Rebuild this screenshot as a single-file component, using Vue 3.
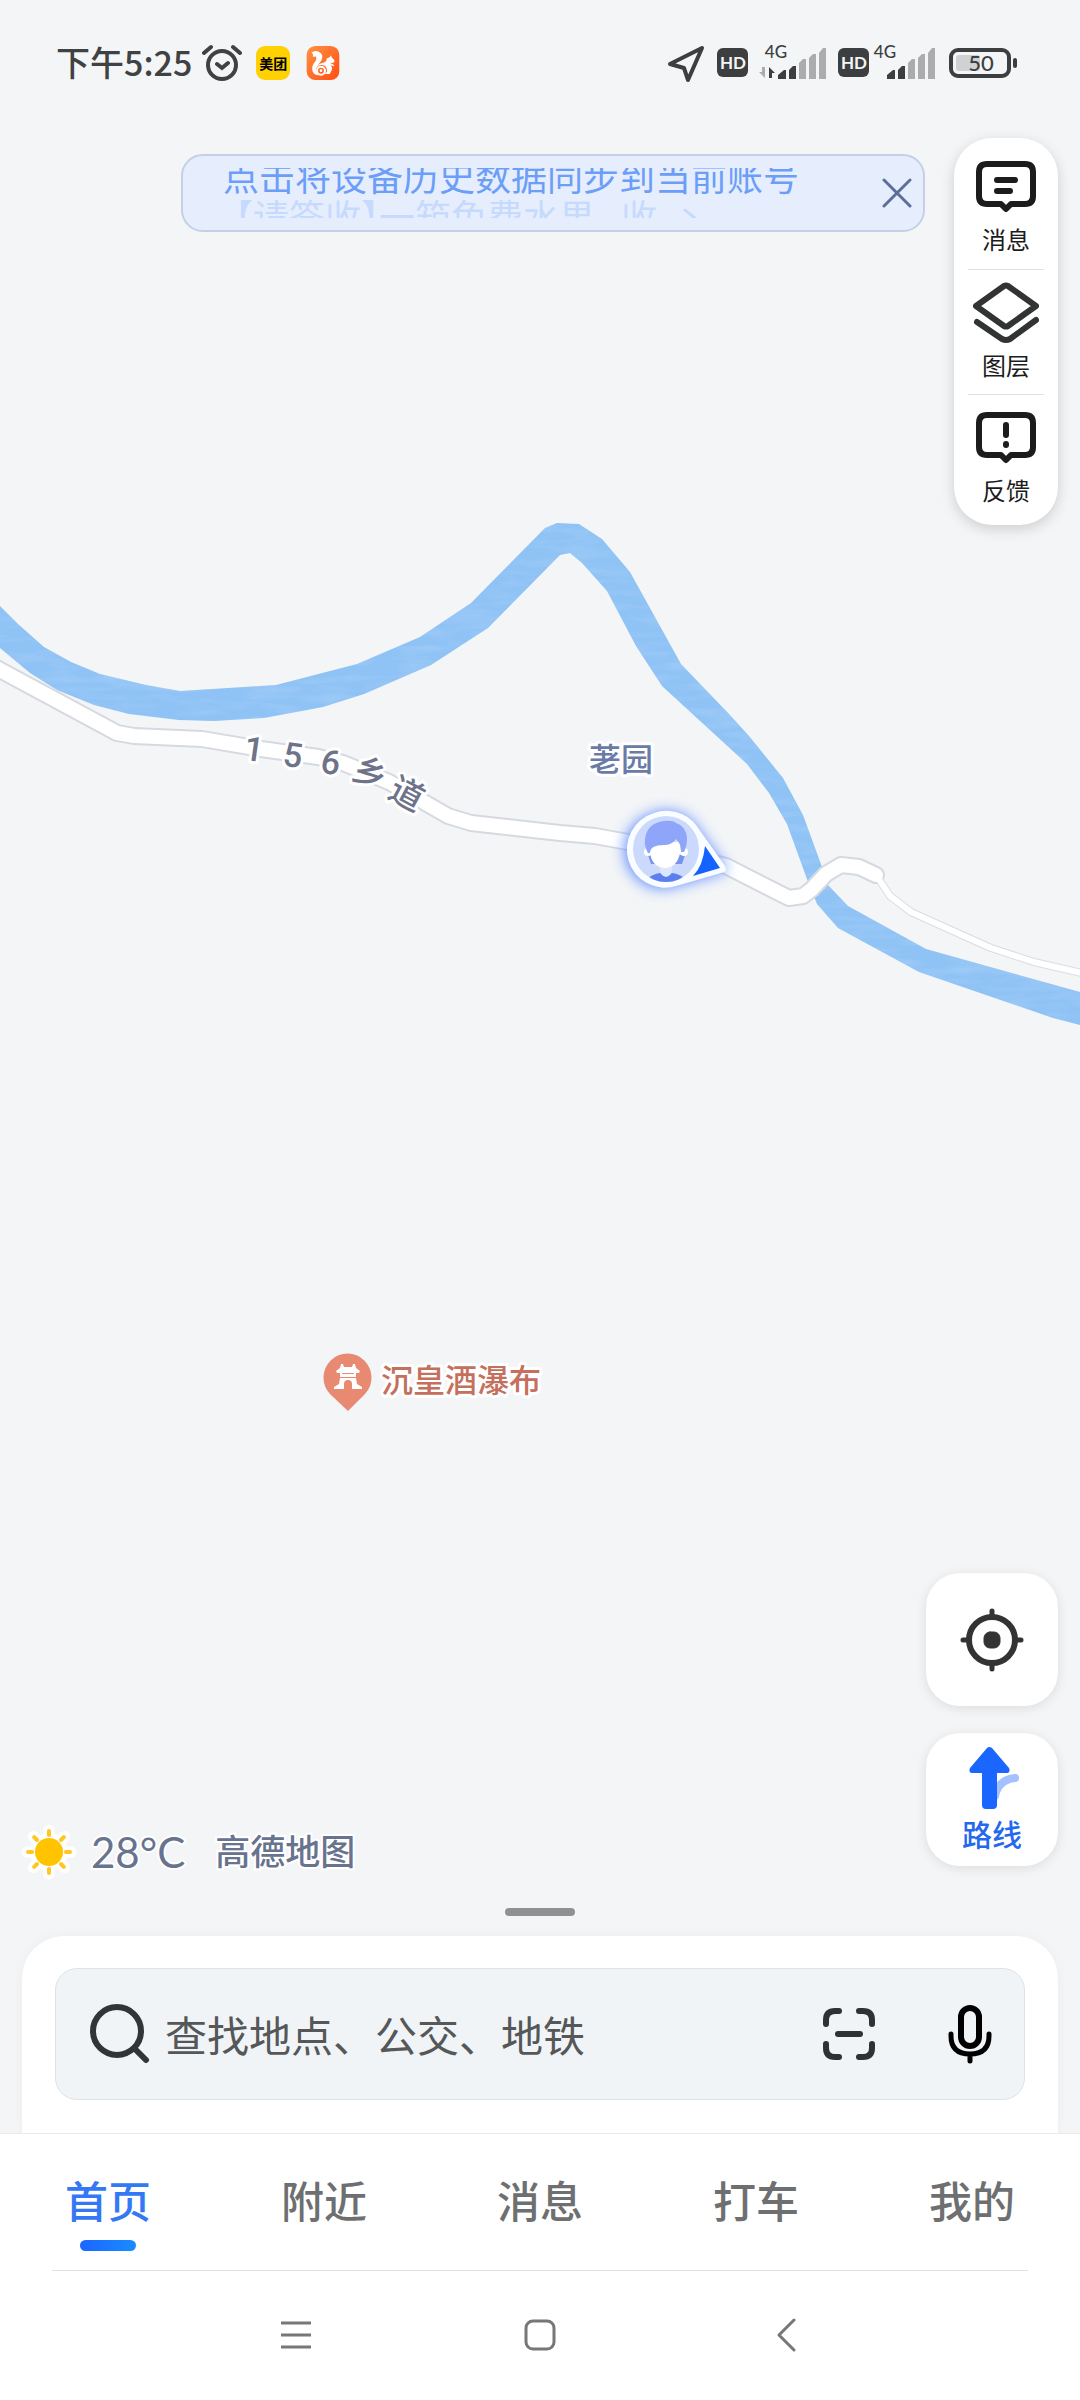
<script setup>
import { ref } from 'vue'

const tabs = ['首页', '附近', '消息', '打车', '我的']
const active = ref('首页')
const keyword = ref('')

const roadName = [
  { ch: '1', x: 254, y: 749, r: 8 },
  { ch: '5', x: 293, y: 755, r: 8 },
  { ch: '6', x: 331, y: 762, r: 12 },
  { ch: '乡', x: 370, y: 773, r: 22 },
  { ch: '道', x: 407, y: 794, r: 28 }
]

const river =
  'M0 606 L18 624 L44 647 L71 662 L100 674 L146 685 L180 691 L276 685 L357 664 L420 637 L471 603 L545 528 L557 523 L579 524 L602 539 L630 572 L681 664 L729 714 L749 736 L783 778 L803 815 L822 867 L828 885 L848 906 L926 949 L1080 992 L1080 1025 L1053 1018 L919 972 L838 928 L817 904 L807 879 L787 824 L769 793 L747 764 L662 686 L636 646 L607 591 L582 563 L570 553 L560 555 L488 628 L431 665 L364 694 L323 707 L264 718 L214 721 L179 720 L129 714 L94 705 L57 690 L30 673 L0 648 Z'
const road =
  'M-10 664 L0 670 L117 733 L134 736 L202 739 L261 749 L318 757 L343 763 L389 782 L448 816 L471 823 L560 833 L595 836 L628 842 L726 866 L789 898 L803 896 L812 889 L826 874 L841 865 L859 867 L876 875'
const lane = 'M876 875 L890 896 L911 912 L953 931 L991 948 L1034 962 L1090 975'
</script>

<template>
  <div class="app">
    <svg class="map" viewBox="0 0 1080 2400" preserveAspectRatio="xMidYMin slice" role="img" aria-label="地图">
      <defs>
        <filter id="water" x="0" y="0" width="1" height="1">
          <feTurbulence type="fractalNoise" baseFrequency="0.02 0.12" numOctaves="3" seed="4" />
          <feColorMatrix values="0 0 0 0 0.6  0 0 0 0 0.8  0 0 0 0 1  2 0 0 0 -0.8" />
          <feComposite in2="SourceGraphic" operator="in" />
        </filter>
        <filter id="glow" x="-0.5" y="-0.5" width="2" height="2">
          <feGaussianBlur stdDeviation="7" />
        </filter>
        <clipPath id="face"><circle cx="666" cy="849" r="33" /></clipPath>
      </defs>
      <path :d="river" fill="#8fc2f5" />
      <path :d="river" fill="#8fc2f5" filter="url(#water)" opacity="0.25" />

      <g fill="none" stroke-linejoin="round">
        <path :d="lane" stroke="#dadce3" stroke-width="8" />
        <path :d="road" stroke="#d6d9e0" stroke-width="18" stroke-linecap="round" />
        <path :d="lane" stroke="#fff" stroke-width="6" />
        <path :d="road" stroke="#fff" stroke-width="14" stroke-linecap="round" />
      </g>

      <g class="label road-label">
        <text v-for="(c, i) in roadName" :key="i" :x="c.x" :y="c.y + 12" :transform="`rotate(${c.r} ${c.x} ${c.y})`">{{ c.ch }}</text>
      </g>
      <text class="label village" x="621" y="771">荖园</text>

      <g>
        <path d="M651 814 A38 38 0 0 1 693 822 L725 866 Q728 872 722 873 L674 887 A38 38 0 1 1 651 814Z" fill="#4f80ff" filter="url(#glow)" opacity="0.85" />
        <path d="M654 813 A38 38 0 0 1 696 825 L725 866 Q728 872 721 873 L676 886 A38 38 0 1 1 654 813Z" fill="#fafdff" />
        <circle cx="666" cy="849" r="33" fill="#cbdafc" />
        <g clip-path="url(#face)">
          <path d="M648 855h37l-3 9h-31z" fill="#7893ee" />
          <path d="M645 880q8-6 15-7l12 0q8 1 15 7v8h-42z" fill="#5c7ff0" />
          <path d="M660 864h12v7q0 4-6 6-6-2-6-6z" fill="#dce7ff" />
          <circle cx="648" cy="852" r="4" fill="#fff" />
          <circle cx="684" cy="852" r="4" fill="#fff" />
          <path d="M650 842h30v10q-2 15-15 16-13-1-15-15z" fill="#fff" />
          <path d="M648 853q-4-7-3-14 2-16 19-18 9-1 12 2 10 3 11 15 0 8-3 14h-3q1-7-5-13-4 6-12 6-14 0-14 8z" fill="#8ea5f9" />
        </g>
        <path d="M705 846 L720 868 L693 876 Q703 866 705 846Z" fill="#1462ff" />
      </g>

      <path d="M348 1411 L330 1394 A24 24 0 1 1 365 1394Z" fill="#e88a72" />
      <g fill="#fff">
        <path d="M341 1364h2l1 3h8l1-3h2l1 4 4 3-1 2h-3v4h-16v-4h-3l-1-2 4-3z" />
        <path d="M340 1378h16l1 6 5 3v2h-10v-5q0-4-4-4t-4 4v5h-10v-2l5-3z" />
      </g>
      <path d="M342 1373h12v1h-12z" fill="#e88a72" />
      <text class="label scenic" x="381" y="1392">沉皇酒瀑布</text>
    </svg>

    <header class="status">
      <div class="status-side">
        <span class="time">下午5:25</span>
        <svg class="alarm" width="40" height="38" viewBox="0 0 40 38" fill="none" stroke="#404142" stroke-width="4" stroke-linecap="round">
          <circle cx="20" cy="21" r="14" /><path d="M2 9l7-6M38 9l-7-6M15 20l5 4 6-5" />
        </svg>
        <span class="meituan">美团</span>
        <svg class="uc" width="34" height="34" viewBox="0 0 98 102">
          <defs><linearGradient id="ucg" x1="0" y1="0" x2="1" y2="1"><stop offset="0" stop-color="#ff9142" /><stop offset="1" stop-color="#ff4e14" /></linearGradient></defs>
          <rect width="98" height="102" rx="26" fill="url(#ucg)" />
          <path d="M14 20Q24 12 36 17 52 24 45 42 40 51 32 58 38 52 50 50 57 49 60 43L59 38 70 33 72 28 76 35 83 42 83 49Q74 52 70 52 82 55 83 61L71 58Q79 64 75 73L69 84H54L61 77Q62 60 48 57 34 55 29 66 25 80 40 87 20 90 17 73 14 61 24 49 32 40 27 31 22 34 18 31 22 24 14 20Z" fill="#fff" />
          <circle cx="43" cy="74" r="12" fill="none" stroke="#fff" stroke-width="6" /><circle cx="43" cy="74" r="4" fill="#fff" />
        </svg>
      </div>
      <svg class="signals" width="352" height="44" viewBox="666 42 352 44" aria-label="信号和电量">
        <path d="M670 64L702 48 688 80 684 68Z" fill="none" stroke="#3d3e3f" stroke-width="4" stroke-linejoin="round" />
        <g fill="#3d3e3f">
          <rect x="717" y="48" width="31" height="29" rx="6" />
          <rect x="838" y="48" width="31" height="29" rx="6" />
          <path d="M778 79v-4l6-5h2v9zM789 79v-9l4-4h3v13zM887 79v-4l6-5h2v9zM898 79v-9l4-4h3v13z" />
          <path d="M769 67l6 6h-3v5h-3z" />
          <rect x="1013" y="58" width="4" height="10" rx="2" />
        </g>
        <path d="M765 67v11l-6-6h3v-5z" fill="#abacae" />
        <g fill="#abacae">
          <path v-for="d in [0, 109]" :key="d" :transform="`translate(${d} 0)`" d="M799 79v-16l4-4h3v20zM809 79v-21l4-4h3v25zM819 79v-26l4-5h3v31z" />
        </g>
        <g class="hd"><text x="733" y="69">HD</text><text x="854" y="69">HD</text></g>
        <g class="net"><text x="776" y="58">4G</text><text x="885" y="58">4G</text></g>
        <rect x="956" y="55" width="24" height="16" rx="3" fill="#d0d1d3" />
        <rect x="951" y="50" width="58" height="26" rx="7" fill="none" stroke="#3d3e3f" stroke-width="4" />
        <text class="power" x="981" y="71">50</text>
      </svg>
    </header>

    <section class="top-row">
      <div class="banner">
        <div class="ticker">
          <p class="line">点击将设备历史数据同步到当前账号</p>
          <p class="line next">【请签收】一箱免费水果，&nbsp;收&nbsp;&nbsp;丶</p>
        </div>
        <button class="close" type="button" aria-label="关闭">
          <svg width="30" height="30" viewBox="0 0 30 30" stroke="#5c6f98" stroke-width="3" stroke-linecap="round"><path d="M2 2l26 26M28 2L2 28" /></svg>
        </button>
      </div>
      <nav class="tools">
        <button type="button">
          <svg width="66" height="62" viewBox="0 0 66 62" fill="none" stroke="#1c1c1d" stroke-width="6" stroke-linecap="round" stroke-linejoin="round">
            <path d="M14 8h38q8 0 8 8v24q0 8-8 8h-14l-5 5-5-5h-14q-8 0-8-8v-24q0-8 8-8z" /><path d="M24 24h18M24 35h13" />
          </svg>
          <span>消息</span>
        </button>
        <button type="button">
          <svg width="66" height="62" viewBox="0 0 66 62" fill="none" stroke="#323333" stroke-width="6" stroke-linecap="round" stroke-linejoin="round">
            <path d="M31 4q2-1 4 0l28 20-28 20q-2 1-4 0L3 24z" /><path d="M4 40l25 17q4 2 8 0L63 38" />
          </svg>
          <span>图层</span>
        </button>
        <button type="button">
          <svg width="66" height="62" viewBox="0 0 66 62" fill="none" stroke="#1c1c1d" stroke-width="6" stroke-linecap="round" stroke-linejoin="round">
            <path d="M14 8h38q8 0 8 8v24q0 8-8 8h-14l-5 5-5-5h-14q-8 0-8-8v-24q0-8 8-8z" /><path d="M33 18v10M33 37v1" />
          </svg>
          <span>反馈</span>
        </button>
      </nav>
    </section>

    <section class="map-foot">
      <div class="weather">
        <svg width="56" height="56" viewBox="-28 -28 56 56" stroke-linecap="round">
          <g stroke="#fff" stroke-width="11"><path v-for="a in 8" :key="a" :transform="`rotate(${a * 45})`" d="M0-22v4" /></g>
          <circle r="19" fill="#fff" />
          <g stroke="#ffc71f" stroke-width="4"><path v-for="a in 8" :key="a" :transform="`rotate(${a * 45})`" d="M0-21v4" /></g>
          <circle r="14" fill="#ffc300" />
        </svg>
        <span class="temp">28°C</span>
        <span class="brand">高德地图</span>
      </div>
      <div class="fabs">
        <button type="button" aria-label="定位">
          <svg width="66" height="66" viewBox="-33 -33 66 66" fill="none" stroke="#333" stroke-width="5" stroke-linecap="round">
            <circle r="23" stroke-width="6" /><path d="M0-29v4M0 29v-4M-29 0h4M29 0h-4" /><rect x="-8" y="-8" width="16" height="16" rx="6" fill="#333" stroke-width="1" />
          </svg>
        </button>
        <button type="button" class="route">
          <svg width="66" height="66" viewBox="959 1746 66 66">
            <path d="M995 1796q3-16 20-18" fill="none" stroke="#a5c0ff" stroke-width="8" stroke-linecap="round" />
            <path d="M987 1748q2-2 5 0l17 20q2 5-3 5h-9v32q0 4-4 4h-7q-4 0-4-4v-32h-9q-5 0-3-5z" fill="#1a66ff" />
          </svg>
          <span>路线</span>
        </button>
      </div>
    </section>

    <div class="handle"></div>

    <section class="sheet">
      <form class="search" @submit.prevent>
        <svg width="60" height="60" viewBox="0 0 60 60" fill="none" stroke="#323536" stroke-width="6" stroke-linecap="round"><circle cx="27" cy="27" r="24" /><path d="M45 45l11 11" /></svg>
        <input v-model="keyword" type="text" aria-label="搜索" placeholder="查找地点、公交、地铁" />
        <button type="button" aria-label="扫一扫">
          <svg width="54" height="54" viewBox="0 0 54 54" fill="none" stroke="#2f3233" stroke-width="6" stroke-linecap="round"><path d="M4 17v-4q0-9 9-9h4M37 4h4q9 0 9 9v4M50 37v4q0 9-9 9h-4M17 50h-4q-9 0-9-9v-4M16 27h22" /></svg>
        </button>
        <button type="button" aria-label="语音">
          <svg width="44" height="60" viewBox="0 0 44 60" fill="none" stroke="#000" stroke-width="5" stroke-linecap="round"><rect x="13" y="4" width="18" height="38" rx="9" stroke-width="6" /><path d="M3 30v2q0 18 19 18t19-18v-2M22 51v6" /></svg>
        </button>
      </form>
    </section>

    <nav class="tabs">
      <button v-for="t in tabs" :key="t" type="button" :class="{ on: t === active }" @click="active = t">{{ t }}</button>
    </nav>

    <footer class="sysnav">
      <button type="button" aria-label="任务"><svg width="34" height="34" viewBox="0 0 34 34" stroke="#777" stroke-width="3"><path d="M2 5h30M2 17h30M2 29h30" /></svg></button>
      <button type="button" aria-label="主页"><svg width="34" height="34" viewBox="0 0 34 34" fill="none" stroke="#777" stroke-width="3"><rect x="3" y="3" width="28" height="28" rx="7" /></svg></button>
      <button type="button" aria-label="返回"><svg width="34" height="34" viewBox="0 0 34 34" fill="none" stroke="#777" stroke-width="3" stroke-linecap="round" stroke-linejoin="round"><path d="M27 2L12 17l15 15" /></svg></button>
    </footer>
  </div>
</template>

<style>
body { background: #f3f5f7; }
</style>

<style scoped>
.app {
  position: relative;
  display: flex;
  flex-direction: column;
  min-height: 100vh;
  overflow: hidden;
  background: #f3f5f7;
  font-family: "Noto Sans CJK SC", "Noto Sans", sans-serif;
  color: #1c1c1d;
}
.app > * { position: relative; }
.app > .map { position: absolute; top: 0; left: 0; width: 100%; height: 100%; }
button { border: 0; padding: 0; margin: 0; background: none; font: inherit; color: inherit; }
svg { display: block; flex: none; }
p { margin: 0; }

.label { paint-order: stroke; stroke: #fff; stroke-width: 6px; stroke-linejoin: round; font-size: 32px; font-weight: 500; }
.road-label { fill: #6d7389; text-anchor: middle; font-family: Roboto, "Noto Sans CJK SC", sans-serif; font-size: 34px; }
.village { fill: #6a7ba8; text-anchor: middle; }
.scenic { fill: #c4705d; }

.status { display: flex; justify-content: space-between; align-items: flex-start; height: 96px; padding: 42px 62px 0 56px; }
.status-side { display: flex; align-items: center; height: 42px; }
.time { padding-bottom: 2px; font-size: 34px; line-height: 40px; font-weight: 500; color: #404142; }
.alarm { margin-left: 10px; }
.meituan { width: 34px; height: 34px; margin: 0 16px 0 14px; border-radius: 9px; background: #ffd100; color: #000; font-size: 14px; line-height: 34px; font-weight: 700; text-align: center; }
.hd { fill: #f3f5f7; font: 700 17px Lato, sans-serif; text-anchor: middle; }
.net { fill: #3d3e3f; font: 500 17px Lato, sans-serif; text-anchor: middle; }
.power { fill: #3d3e3f; font: 500 22px Lato, sans-serif; text-anchor: middle; }

.top-row { display: flex; justify-content: flex-end; align-items: flex-start; gap: 29px; padding-right: 22px; }
.banner { display: flex; align-items: center; box-sizing: border-box; width: 744px; height: 78px; margin-top: 16px; padding: 0 11px 0 40px; border: 2px solid #c3d0e8; border-radius: 22px; background: #e6eefe; }
.ticker { flex: 1; height: 50px; overflow: hidden; }
.line { font-size: 36px; line-height: 40px; color: #6c9ef8; white-space: nowrap; }
.line:first-child { margin-top: -13px; }
.line.next { padding-left: 12px; color: #c6dafd; font-feature-settings: "halt"; }

.tools { display: flex; flex-direction: column; box-sizing: border-box; width: 104px; padding: 6px 14px; border-radius: 38px; background: #fff; box-shadow: 0 4px 14px rgba(0, 0, 0, 0.16); }
.tools button { display: flex; flex-direction: column; align-items: center; height: 125px; padding-top: 12px; box-sizing: border-box; font-size: 24px; line-height: 42px; }
.tools button + button { border-top: 1px solid #e1e2e4; }

.map-foot { display: flex; flex: 1; justify-content: space-between; align-items: flex-end; padding: 0 22px 42px 21px; }
.weather { display: flex; align-items: center; height: 56px; margin-bottom: -14px; color: #68738e; }
.temp { margin-left: 14px; font: 400 42px/56px Lato, sans-serif; -webkit-text-stroke: 4px #fff; paint-order: stroke; }
.brand { margin-left: 30px; padding-bottom: 4px; font-size: 35px; line-height: 52px; font-weight: 500; -webkit-text-stroke: 4px #fff; paint-order: stroke; }
.fabs { display: flex; flex-direction: column; gap: 27px; }
.fabs button { display: flex; flex-direction: column; align-items: center; justify-content: center; width: 132px; height: 133px; border-radius: 34px; background: #fff; box-shadow: 0 2px 12px rgba(0, 0, 0, 0.1); }
.route span { font-size: 30px; line-height: 42px; font-weight: 500; color: #2468ee; }

.handle { width: 70px; height: 8px; margin: 0 auto 20px; border-radius: 4px; background: #8f9092; }
.sheet { margin: 0 22px; padding: 32px 33px 33px; border-radius: 42px 42px 0 0; background: #fff; box-shadow: 0 0 12px rgba(0, 0, 0, 0.04); }
.search { display: flex; align-items: center; box-sizing: border-box; height: 132px; padding: 0 32px 0 34px; border: 1px solid #dfe3e6; border-radius: 22px; background: #f0f4f7; }
.search input { flex: 1; min-width: 0; height: 60px; margin-left: 15px; padding: 0; border: 0; outline: 0; background: none; font: 400 42px/60px "Noto Sans CJK SC", sans-serif; color: #333; }
.search input::placeholder { color: #555758; opacity: 1; }
.search button + button { margin-left: 72px; }

.tabs { display: flex; box-sizing: border-box; height: 137px; border-top: 1px solid #eaebec; background: #fff; }
.tabs button { position: relative; flex: 1; padding-bottom: 6px; font-size: 43px; line-height: 60px; font-weight: 500; color: #6e6f70; }
.tabs .on { color: #3478f6; }
.tabs .on::after { content: ""; position: absolute; left: 50%; bottom: 19px; width: 56px; height: 11px; margin-left: -28px; border-radius: 6px; background: linear-gradient(90deg, #1a66ff, #1a8cff); }
.sysnav { display: flex; justify-content: center; align-items: center; gap: 210px; height: 130px; background: linear-gradient(#e2e3e4, #e2e3e4) center top / calc(100% - 104px) 1px no-repeat #fff; }
</style>
